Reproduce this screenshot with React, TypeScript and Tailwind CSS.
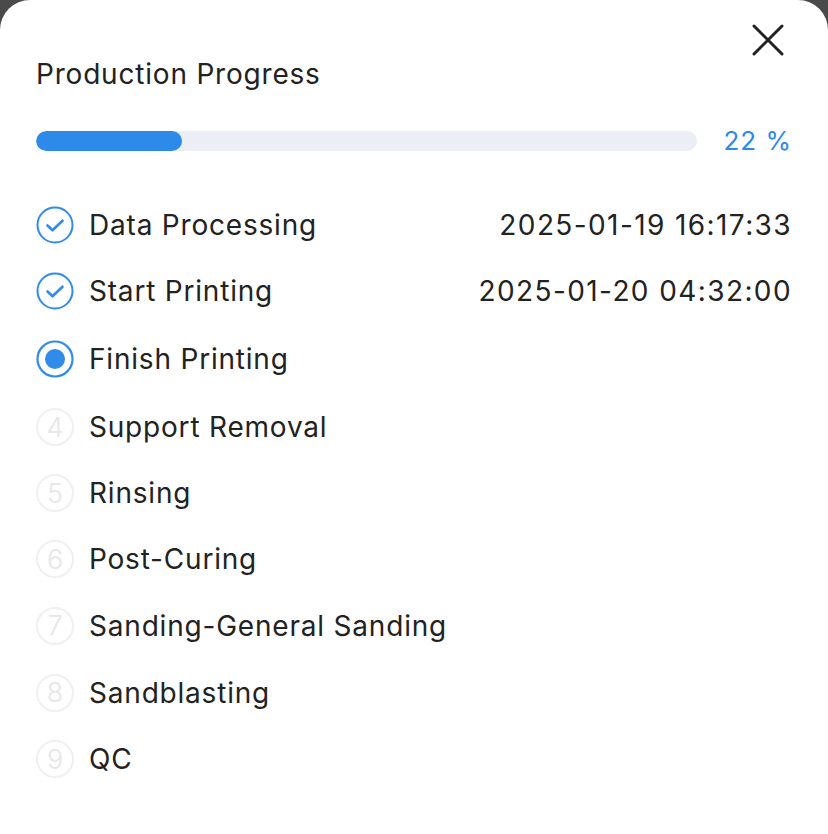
import React from 'react';

type Step = {
  title: string;
  time?: string;
  status: 'done' | 'current' | 'pending';
  rowClass: string;
};

const steps: Step[] = [
  { title: 'Data Processing', time: '2025-01-19 16:17:33', status: 'done', rowClass: 'h-[65px]' },
  { title: 'Start Printing', time: '2025-01-20 04:32:00', status: 'done', rowClass: 'h-[67px]' },
  { title: 'Finish Printing', status: 'current', rowClass: 'h-[70px]' },
  { title: 'Support Removal', status: 'pending', rowClass: 'h-[66px]' },
  { title: 'Rinsing', status: 'pending', rowClass: 'h-[66px]' },
  { title: 'Post-Curing', status: 'pending', rowClass: 'h-[66px]' },
  { title: 'Sanding-General Sanding', status: 'pending', rowClass: 'h-[67px]' },
  { title: 'Sandblasting', status: 'pending', rowClass: 'h-[67px]' },
  { title: 'QC', status: 'pending', rowClass: 'h-[66px]' },
];

function StepIcon({ status, index }: { status: Step['status']; index: number }) {
  if (status === 'done') {
    return (
      <svg width="38" height="38" viewBox="0 0 38 38" fill="none">
        <circle cx="19" cy="19" r="17.5" stroke="#2F8CE9" strokeWidth="2" />
        <path
          d="M11.5 19.5l5 4.8 10-9.6"
          stroke="#2F8CE9"
          strokeWidth="2.6"
          strokeLinecap="round"
          strokeLinejoin="round"
        />
      </svg>
    );
  }
  if (status === 'current') {
    return (
      <svg width="38" height="38" viewBox="0 0 38 38" fill="none">
        <circle cx="19" cy="19" r="17.5" stroke="#2F8CE9" strokeWidth="2.2" />
        <circle cx="19" cy="19" r="10" fill="#2F8CE9" />
      </svg>
    );
  }
  return (
    <div className="flex h-[38px] w-[38px] items-center justify-center rounded-full border-2 border-[#f0f0f0] text-[27px] font-light leading-none text-[#e6e6e6]">
      {index + 1}
    </div>
  );
}

export default function App() {
  return (
    <div className="h-[834px] w-[828px] bg-[#4a4a4a] font-['Inter','Noto_Sans',sans-serif]">
      <div className="relative h-full w-full rounded-t-[30px] bg-white px-[36px] pt-[57px]">
        <button className="absolute right-[44px] top-[24px] h-[32px] w-[32px]">
          <svg width="32" height="32" viewBox="0 0 32 32" fill="none">
            <path d="M2 2L30 30M30 2L2 30" stroke="#222222" strokeWidth="3" strokeLinecap="round" />
          </svg>
        </button>

        <h2 className="text-[28px] leading-[34px] font-normal tracking-[0.8px] text-[#222222]">
          Production Progress
        </h2>

        <div className="mt-[34px] flex h-[32px] items-center">
          <div className="h-[20px] flex-1 overflow-hidden rounded-full bg-[#ebeef5]">
            <div className="h-full w-[22%] rounded-full bg-[#2d8ae8]" />
          </div>
          <span className="ml-[26px] text-[26px] leading-none tracking-[1px] text-[#2d8ae8]">22 %</span>
        </div>

        <div className="mt-[35px] flex flex-col">
          {steps.map((s, i) => (
            <div key={s.title} className={`flex items-center ${s.rowClass}`}>
              <StepIcon status={s.status} index={i} />
              <span className="ml-[15px] flex-1 text-[28px] leading-none tracking-[0.8px] text-[#222222]">
                {s.title}
              </span>
              {s.time && (
                <span className="text-[28px] leading-none tracking-[1.4px] text-[#222222]">
                  {s.time}
                </span>
              )}
            </div>
          ))}
        </div>
      </div>
    </div>
  );
}
